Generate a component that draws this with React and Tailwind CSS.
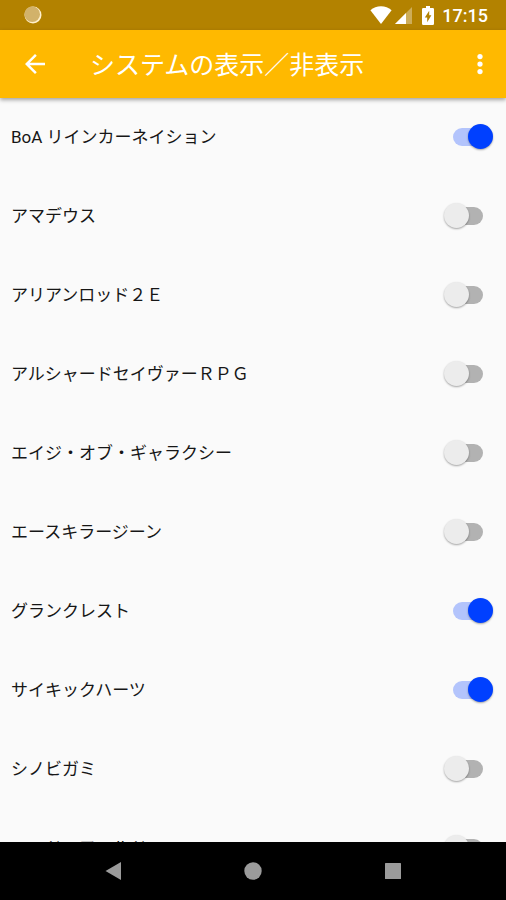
import { useState } from 'react';

const SYSTEMS = [
  { name: 'BoA リインカーネイション', visible: true },
  { name: 'アマデウス', visible: false },
  { name: 'アリアンロッド２Ｅ', visible: false },
  { name: 'アルシャードセイヴァーＲＰＧ', visible: false },
  { name: 'エイジ・オブ・ギャラクシー', visible: false },
  { name: 'エースキラージーン', visible: false },
  { name: 'グランクレスト', visible: true },
  { name: 'サイキックハーツ', visible: true },
  { name: 'シノビガミ', visible: false },
  { name: 'ソード・ワールド 2.0', visible: false },
];

function StatusBar() {
  return (
    <div className="flex h-[30px] shrink-0 items-center justify-between bg-[#b38200] pl-6 pr-[18px] text-white">
      <svg className="size-[18px]" viewBox="0 0 18 18">
        <circle cx="9" cy="9" r="8.5" fill="#fff0cc" />
        <circle cx="8.2" cy="8.2" r="7.8" fill="#d2b26a" />
      </svg>
      <div className="flex items-center">
        <svg className="h-[18px] w-[22px]" viewBox="0 0 22 18" fill="currentColor">
          <path d="M11 18 0.4 4.2C3.4 1.6 7 0.3 11 0.3s7.6 1.3 10.6 3.9z" />
        </svg>
        <svg className="ml-[3px] h-[17px] w-[17px]" viewBox="0 0 17 17" fill="currentColor">
          <path d="M17 0v17H0z" opacity="0.35" />
          <path d="M11 6v11H0z" />
        </svg>
        <svg className="ml-[10px] h-[19px] w-3" viewBox="0 0 12 19">
          <path d="M4 0h4v2h2.8a1.2 1.2 0 0 1 1.2 1.2v14.6a1.2 1.2 0 0 1-1.2 1.2H1.2A1.2 1.2 0 0 1 0 17.8V3.2A1.2 1.2 0 0 1 1.2 2H4z" fill="#fff" />
          <path d="M7.2 4.8 2.8 11.5h2.4v4.7l4.2-6.9H7.2z" fill="#b38200" />
        </svg>
        <span className="ml-2 pt-0.5 text-[18px] leading-5 font-medium">17:15</span>
      </div>
    </div>
  );
}

function AppBar() {
  return (
    <header className="relative z-10 flex h-[68px] shrink-0 items-center bg-[#ffb900] pl-5 pr-[11px] text-white shadow-[0_2px_4px_rgba(0,0,0,0.35)]">
      <button type="button" aria-label="戻る" className="shrink-0">
        <svg className="size-[30px]" viewBox="0 0 24 24" fill="currentColor">
          <path d="M20 11H7.83l5.59-5.59L12 4l-8 8 8 8 1.41-1.41L7.83 13H20v-2z" />
        </svg>
      </button>
      <h1 className="ml-10 flex-1 truncate pt-1 text-[25px] leading-8">システムの表示／非表示</h1>
      <button type="button" aria-label="メニュー" className="shrink-0">
        <svg className="size-[30px]" viewBox="0 0 24 24" fill="currentColor">
          <circle cx="12" cy="6" r="2.1" />
          <circle cx="12" cy="12" r="2.1" />
          <circle cx="12" cy="18" r="2.1" />
        </svg>
      </button>
    </header>
  );
}

function SystemRow({ name, visible, onToggle }) {
  return (
    <li>
      <label className="flex h-[79px] items-center justify-between gap-4 pb-0.5 pl-[11px] pr-[13px] text-[17px] leading-6 text-[#161616]">
        {name}
        <input
          type="checkbox"
          role="switch"
          checked={visible}
          onChange={onToggle}
          className="relative h-[25px] w-[49px] shrink-0 appearance-none before:absolute before:top-1 before:left-[9px] before:h-[18px] before:w-[30px] before:rounded-full before:bg-[#b2b2b2] after:absolute after:top-0 after:left-0 after:size-[25px] after:rounded-full after:bg-[#ececec] after:shadow-[0_1px_2px_rgba(0,0,0,0.35)] checked:before:bg-[#b3c4fc] checked:after:left-6 checked:after:bg-[#0040ff]"
        />
      </label>
    </li>
  );
}

function NavBar() {
  return (
    <nav className="flex h-[58px] shrink-0 items-center justify-center gap-[110px] bg-black text-[#9b9b9b]">
      <button type="button" aria-label="戻る">
        <svg className="size-[30px]" viewBox="0 0 30 30" fill="currentColor">
          <path d="M23 6v18L7.5 15z" />
        </svg>
      </button>
      <button type="button" aria-label="ホーム">
        <svg className="size-[30px]" viewBox="0 0 30 30" fill="currentColor">
          <circle cx="15" cy="15" r="8.7" />
        </svg>
      </button>
      <button type="button" aria-label="最近使ったアプリ">
        <svg className="size-[30px]" viewBox="0 0 30 30" fill="currentColor">
          <rect x="7" y="7" width="16" height="16" rx="0.5" />
        </svg>
      </button>
    </nav>
  );
}

export default function App() {
  const [systems, setSystems] = useState(SYSTEMS);

  const toggle = (index) =>
    setSystems((prev) => prev.map((s, i) => (i === index ? { ...s, visible: !s.visible } : s)));

  return (
    <div className="flex h-screen flex-col bg-[#fafafa] font-['Roboto','Noto_Sans_CJK_JP',sans-serif]">
      <StatusBar />
      <AppBar />
      <main className="min-h-0 flex-1 overflow-y-auto [scrollbar-width:none]">
        <ul>
          {systems.map((s, i) => (
            <SystemRow key={s.name} name={s.name} visible={s.visible} onToggle={() => toggle(i)} />
          ))}
        </ul>
      </main>
      <NavBar />
    </div>
  );
}
